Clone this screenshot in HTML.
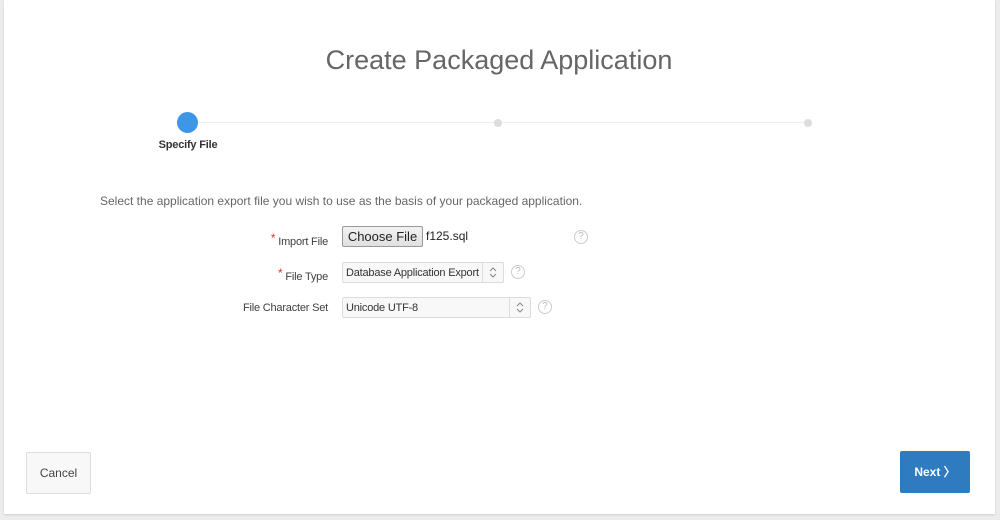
<!DOCTYPE html>
<html><head><style>
body{margin:0;width:1000px;height:520px;background:#ececec;font-family:"Liberation Sans",sans-serif;position:relative;overflow:hidden}
.panel{position:absolute;left:4px;top:0;width:991px;height:514px;background:#fff;box-shadow:0 1px 2px rgba(0,0,0,.12)}
.abs{position:absolute}
.lbl{font-size:11px;color:#404040;text-align:right;width:120px;letter-spacing:-0.2px}
.req{color:#e5332a;font-size:12px;vertical-align:3px}
.sel{position:absolute;height:21px;border:1px solid #dcdcdc;border-radius:2px;background:#f8f8f8;font-size:11px;color:#333;line-height:20px;padding-left:3px;box-sizing:border-box;letter-spacing:-0.2px}
.sel .ar{position:absolute;right:0;top:0;width:20px;height:19px;border-left:1px solid #ddd}
.help{position:absolute;width:12px;height:12px;border:1px solid #ccc;border-radius:50%;color:#bbb;font-size:10px;text-align:center;line-height:12px}
</style></head><body>
<div class="panel"></div>
<div class="abs" style="left:0;width:998px;top:45px;text-align:center;font-size:27px;color:#666">Create Packaged Application</div>
<div class="abs" style="left:188px;top:122px;width:620px;height:1px;background:#eee"></div>
<div class="abs" style="left:177px;top:112px;width:21px;height:21px;border-radius:50%;background:#3d97e6"></div>
<div class="abs" style="left:494px;top:119px;width:8px;height:8px;border-radius:50%;background:#ddd"></div>
<div class="abs" style="left:804px;top:119px;width:8px;height:8px;border-radius:50%;background:#ddd"></div>
<div class="abs" style="left:140px;width:96px;top:139px;text-align:center;font-size:11px;font-weight:bold;color:#333;letter-spacing:-0.2px">Specify File</div>
<div class="abs" style="left:100px;top:194px;font-size:12px;color:#666">Select the application export file you wish to use as the basis of your packaged application.</div>
<div class="abs lbl" style="left:208px;top:231px"><span class="req">*</span> Import File</div>
<div class="abs" style="left:342px;top:226px;width:79px;height:19px;border:1px solid #999;border-radius:2px;background:linear-gradient(#f2f2f2,#e0e0e0);font-size:13px;text-align:center;line-height:19px;color:#222">Choose File</div>
<div class="abs" style="left:426px;top:229px;font-size:12px;color:#222">f125.sql</div>
<div class="help" style="left:574px;top:230px">?</div>
<div class="abs lbl" style="left:208px;top:266px"><span class="req">*</span> File Type</div>
<div class="sel" style="left:342px;top:262px;width:162px">Database Application Export<div class="ar"><svg width="20" height="19"><path d="M7 8l3-3 3 3M7 11l3 3 3-3" fill="none" stroke="#888" stroke-width="1"/></svg></div></div>
<div class="help" style="left:511px;top:265px">?</div>
<div class="abs lbl" style="left:208px;top:302px">File Character Set</div>
<div class="sel" style="left:342px;top:297px;width:189px">Unicode UTF-8<div class="ar"><svg width="20" height="19"><path d="M7 8l3-3 3 3M7 11l3 3 3-3" fill="none" stroke="#888" stroke-width="1"/></svg></div></div>
<div class="help" style="left:538px;top:300px">?</div>
<div class="abs" style="left:26px;top:452px;width:63px;height:40px;border:1px solid #dedede;border-radius:2px;background:#f8f8f8;font-size:12px;color:#444;text-align:center;line-height:40px">Cancel</div>
<div class="abs" style="left:900px;top:451px;width:70px;height:42px;border-radius:2px;background:#2f7bbf;font-size:12px;color:#fff;font-weight:bold;text-align:center;line-height:42px">Next 〉</div>
</body></html>
